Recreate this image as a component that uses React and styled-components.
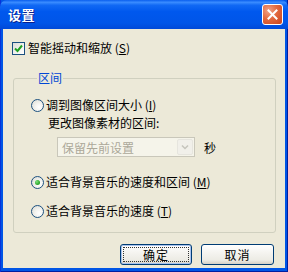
import React from 'react'
import styled, { createGlobalStyle } from 'styled-components'

const Global = createGlobalStyle`
  html, body { margin: 0; padding: 0; }
  body {
    font-family: "Noto Sans CJK SC", "Liberation Sans", sans-serif;
    font-size: 12px;
    color: #000;
  }
`;

const Window = styled.div`
  width: 288px;
  height: 272px;
  display: flex;
  flex-direction: column;
  background: #0055e5;
  box-shadow: inset 1px 0 0 #0831d9, inset -1px 0 0 #001ea0, inset 0 -1px 0 #001ea0;
  box-sizing: border-box;
`;

const TitleBar = styled.div`
  height: 29px;
  flex: none;
  display: flex;
  align-items: center;
  justify-content: space-between;
  padding: 0 5px 0 8px;
  border-radius: 7px 7px 0 0;
  background: linear-gradient(180deg, #0a5fee 0%, #3a8cff 8%, #1169f4 18%, #0058ee 40%, #0055e8 80%, #0049d8 100%);
`;

const Title = styled.span`
  color: #fff;
  font-weight: bold;
  font-size: 13px;
  text-shadow: 1px 1px 0 #0a1e8c;
  letter-spacing: 0.5px;
`;

const CloseButton = styled.div`
  width: 21px;
  height: 21px;
  box-sizing: border-box;
  border: 1px solid #fff;
  border-radius: 3px;
  background: radial-gradient(circle at 30% 30%, #f0a389 0%, #e2693f 45%, #c9421b 100%);
  display: flex;
  align-items: center;
  justify-content: center;
`;

const Body = styled.div`
  flex: 1;
  margin: 0 3px 4px 3px;
  background: #ece9d8;
  padding: 10px 9px 0 9px;
  display: flex;
  flex-direction: column;
`;

const Row = styled.label`
  display: flex;
  align-items: center;
  height: 16px;
  line-height: 16px;
  white-space: nowrap;
  margin-top: ${p => p.$top || 0}px;
  margin-left: ${p => p.$indent || 0}px;
`;

const CheckBox = styled.span`
  width: 13px;
  height: 13px;
  box-sizing: border-box;
  border: 1px solid #1c5180;
  background: linear-gradient(135deg, #dcdcd7 0%, #f4f4f0 60%, #fff 100%);
  margin-right: 3px;
  display: flex;
  align-items: center;
  justify-content: center;
`;

const Radio = styled.span`
  width: 13px;
  height: 13px;
  box-sizing: border-box;
  border-radius: 50%;
  border: 1px solid #1c5180;
  background: radial-gradient(circle at 65% 65%, #fff 0%, #f3f3ef 40%, #d8d8d0 100%);
  margin-right: 2px;
  display: flex;
  align-items: center;
  justify-content: center;
  &::after {
    content: '';
    display: ${p => (p.$checked ? 'block' : 'none')};
    width: 5px;
    height: 5px;
    border-radius: 50%;
    background: radial-gradient(circle at 35% 35%, #7ce27c 0%, #2fa82f 60%, #1c8a1c 100%);
  }
`;

const Group = styled.fieldset`
  margin: 15px 0 0 1px;
  padding: 0 0 13px 17px;
  border: 1px solid #d0d0bf;
  border-radius: 3px;
  min-width: 0;
`;

const Legend = styled.legend`
  color: #0046d5;
  padding: 0 1px;
  margin-left: 6px;
  line-height: 14px;
`;

const SelectRow = styled.div`
  display: flex;
  align-items: center;
  margin: 6px 0 0 26px;
`;

const Select = styled.div`
  width: 138px;
  height: 20px;
  box-sizing: border-box;
  border: 1px solid #c9c7ba;
  background: #f5f4ea;
  display: flex;
  align-items: center;
  justify-content: space-between;
  padding: 1px 1px 1px 4px;
  color: #aca899;
  margin-right: 9px;
`;

const SelectArrow = styled.div`
  width: 16px;
  height: 16px;
  box-sizing: border-box;
  border: 1px solid #e6e5de;
  border-radius: 2px;
  background: #f1f0ea;
  display: flex;
  align-items: center;
  justify-content: center;
`;

const Buttons = styled.div`
  display: flex;
  justify-content: flex-end;
  gap: 9px;
  margin: 11px 2px 0 0;
`;

const Button = styled.div`
  width: ${p => p.$w}px;
  height: 21px;
  box-sizing: border-box;
  border: 1px solid #003c74;
  border-radius: 3px;
  background: linear-gradient(180deg, #fff 0%, #f5f4f0 40%, #ecebe4 80%, #d6d0c5 100%);
  display: flex;
  align-items: center;
  justify-content: center;
  position: relative;
  letter-spacing: 1px;
  box-shadow: ${p => (p.$default ? 'inset 0 0 0 1px #a9c3ee' : 'none')};
  &::before {
    content: '';
    display: ${p => (p.$default ? 'block' : 'none')};
    position: absolute;
    inset: 2px;
    border: 1px dotted #333;
  }
`;

const App = () => (
  <>
    <Global />
    <Window>
      <TitleBar>
        <Title>设置</Title>
        <CloseButton>
          <svg width="11" height="11" viewBox="0 0 11 11">
            <path d="M1.5 1.5 L9.5 9.5 M9.5 1.5 L1.5 9.5" stroke="#fff" strokeWidth="2" strokeLinecap="square" />
          </svg>
        </CloseButton>
      </TitleBar>
      <Body>
        <Row $top={1}>
          <CheckBox>
            <svg width="9" height="9" viewBox="0 0 9 9">
              <path d="M1 4.5 L3.5 7 L8 1.5" stroke="#21a121" strokeWidth="2" fill="none" />
            </svg>
          </CheckBox>
          智能摇动和缩放 (<u>S</u>)
        </Row>
        <Group>
          <Legend>区间</Legend>
          <Row $top={12}>
            <Radio />
            调到图像区间大小 (<u>I</u>)
          </Row>
          <Row $top={2} $indent={17}>更改图像素材的区间:</Row>
          <SelectRow>
            <Select>
              保留先前设置
              <SelectArrow>
                <svg width="8" height="6" viewBox="0 0 8 6">
                  <path d="M1 1.5 L4 4.5 L7 1.5" stroke="#c5c4bc" strokeWidth="1.5" fill="none" />
                </svg>
              </SelectArrow>
            </Select>
            秒
          </SelectRow>
          <Row $top={17}>
            <Radio $checked />
            适合背景音乐的速度和区间 (<u>M</u>)
          </Row>
          <Row $top={13}>
            <Radio />
            适合背景音乐的速度 (<u>T</u>)
          </Row>
        </Group>
        <Buttons>
          <Button $w={72} $default>确定</Button>
          <Button $w={73}>取消</Button>
        </Buttons>
      </Body>
    </Window>
  </>
)

export default App
